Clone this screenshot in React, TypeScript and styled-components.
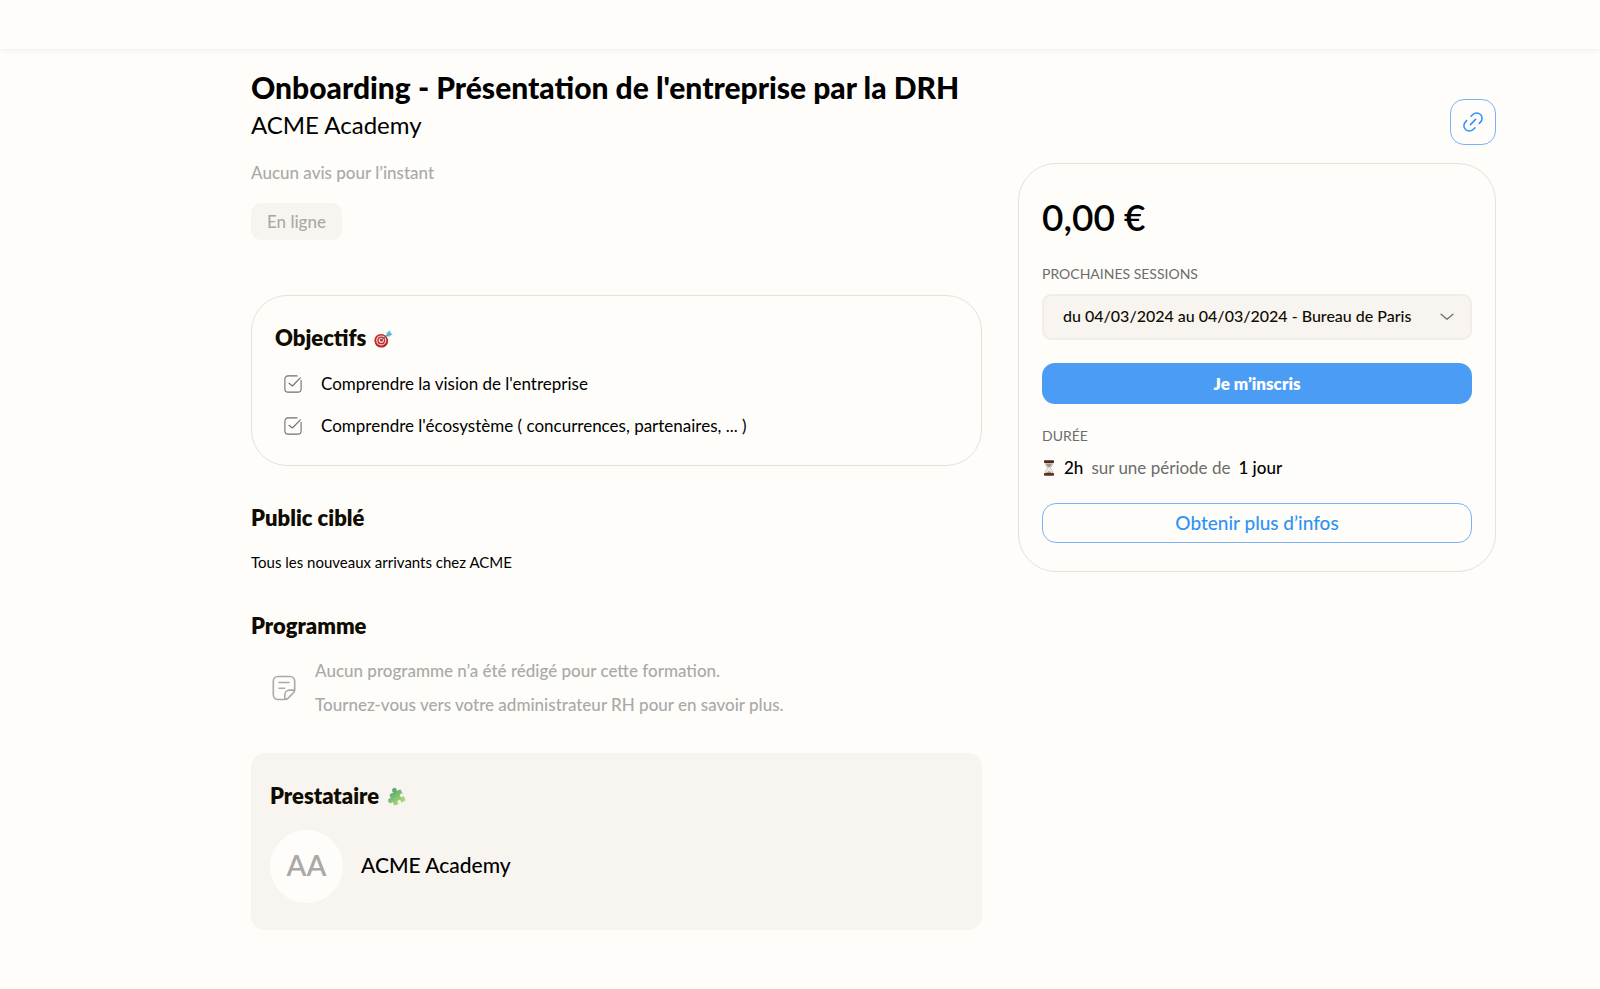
import React from "react";
import styled, { createGlobalStyle } from "styled-components";

const color = {
  page: "#fefdf9",
  soft: "#f8f5f1",
  softBorder: "#f3ece7",
  line: "#e4e2dd",
  text: "#000000",
  heading: "#100c02",
  label: "#6c6c6c",
  muted: "#a9a9a8",
  blue: "#4b9cf5",
  blueText: "#2f93f5",
  blueLine: "#7ab3f5",
};

const GlobalStyle = createGlobalStyle`
  *, *::before, *::after { box-sizing: border-box; }
  body {
    margin: 0;
    background: ${color.page};
    color: ${color.text};
    font-family: Lato, "Open Sans", sans-serif;
    font-size: 17px;
    line-height: 24px;
  }
  button, select { font-family: inherit; cursor: pointer; }
  h1, h2, p, ul { margin: 0; padding: 0; }
  svg { display: block; flex: none; }
`;

const TopBar = styled.header`
  height: 49px;
  background: ${color.page};
  box-shadow: 0 1px 5px rgba(0, 0, 0, 0.07);
`;

const Page = styled.main`
  display: grid;
  grid-template-columns: minmax(0, 1fr) 478px;
  align-items: start;
  gap: 36px;
  padding: 19px 104px 58px 251px;
`;

const Content = styled.div`
  display: flex;
  flex-direction: column;
`;

const Title = styled.h1`
  font-size: 30px;
  line-height: 38px;
  font-weight: 900;
`;

const Organisation = styled.p`
  margin-top: 3px;
  font-size: 24px;
  line-height: 32px;
`;

const Rating = styled.p`
  margin-top: 20px;
  color: ${color.muted};
  font-weight: 500;
`;

const Badge = styled.span`
  display: flex;
  align-items: center;
  align-self: flex-start;
  height: 37px;
  margin-top: 18px;
  padding: 0 16px;
  border-radius: 10px;
  background: ${color.soft};
  color: ${color.muted};
  font-weight: 500;
`;

const Goals = styled.section`
  margin-top: 55px;
  padding: 28px 23px 27px;
  border: 1px solid ${color.line};
  border-radius: 36px;
`;

const Heading = styled.h2`
  display: flex;
  align-items: center;
  gap: 8px;
  color: ${color.heading};
  font-size: 22px;
  line-height: 28px;
  font-weight: 800;
`;

const GoalList = styled.ul`
  display: flex;
  flex-direction: column;
  gap: 18px;
  margin-top: 20px;
  padding-left: 9px;
  list-style: none;
`;

const Goal = styled.li`
  display: flex;
  align-items: center;
  gap: 19px;
`;

const Section = styled.section`
  margin-top: 38px;
`;

const Paragraph = styled.p`
  margin-top: 18px;
  font-size: 15px;
`;

const EmptyProgram = styled.div`
  display: flex;
  align-items: center;
  gap: 19px;
  margin-top: 19px;
  padding-left: 21px;
  color: ${color.muted};
  font-weight: 500;
`;

const EmptyLines = styled.div`
  display: flex;
  flex-direction: column;
  gap: 10px;
`;

const Provider = styled.section`
  margin-top: 36px;
  padding: 29px 19px 27px;
  border-radius: 14px;
  background: ${color.soft};
`;

const ProviderRow = styled.div`
  display: flex;
  align-items: center;
  gap: 18px;
  margin-top: 20px;
`;

const Avatar = styled.span`
  display: grid;
  place-items: center;
  width: 73px;
  height: 73px;
  padding-bottom: 4px;
  border-radius: 50%;
  background: ${color.page};
  color: ${color.muted};
  font-size: 29px;
  line-height: 36px;
  font-weight: 600;
`;

const ProviderName = styled.p`
  font-size: 21px;
  line-height: 28px;
  padding-bottom: 4px;
  font-weight: 500;
`;

const Aside = styled.aside`
  display: flex;
  flex-direction: column;
  padding-top: 31px;
`;

const LinkButton = styled.button`
  display: grid;
  place-items: center;
  align-self: flex-end;
  width: 46px;
  height: 46px;
  padding: 0;
  border: 1px solid ${color.blueLine};
  border-radius: 14px;
  background: transparent;
  color: ${color.blueText};
`;

const BookingCard = styled.section`
  display: flex;
  flex-direction: column;
  margin-top: 18px;
  padding: 29px 23px 28px;
  border: 1px solid ${color.line};
  border-radius: 38px;
`;

const Price = styled.p`
  margin-bottom: 23px;
  font-size: 37px;
  line-height: 48px;
  font-weight: 600;
`;

const Label = styled.label`
  color: ${color.label};
  font-size: 14px;
  line-height: 20px;
  text-transform: uppercase;
`;

const LabelText = styled(Label).attrs({ as: "p" })``;

const SelectBox = styled.div`
  position: relative;
  margin-top: 10px;
`;

const Select = styled.select`
  display: block;
  width: 100%;
  height: 46px;
  padding: 0 48px 3px 19px;
  border: 2px solid ${color.softBorder};
  border-radius: 9px;
  background: ${color.soft};
  color: ${color.heading};
  font-size: 16px;
  font-weight: 500;
  appearance: none;
`;

const SelectArrow = styled.span`
  position: absolute;
  top: 50%;
  right: 18px;
  transform: translateY(-50%);
  color: #6f6f6f;
  pointer-events: none;
`;

const SignUpButton = styled.button`
  height: 41px;
  margin: 23px 0 22px;
  border: 0;
  border-radius: 13px;
  background: ${color.blue};
  color: #ffffff;
  font-size: 17px;
  font-weight: 800;
`;

const Duration = styled.p`
  display: flex;
  align-items: center;
  gap: 8px;
  margin-top: 10px;
  color: ${color.label};
`;

const DurationValue = styled.strong`
  color: ${color.text};
  font-weight: 500;
`;

const InfoButton = styled.button`
  height: 40px;
  margin-top: 23px;
  padding: 0 0 2px;
  border: 1px solid ${color.blueLine};
  border-radius: 14px;
  background: transparent;
  color: ${color.blueText};
  font-size: 19px;
  font-weight: 500;
`;

const LinkIcon = () => (
  <svg width="26" height="26" viewBox="0 0 24 24" fill="none" stroke="currentColor" strokeWidth="1.4" strokeLinecap="round" aria-hidden="true">
    <g transform="rotate(-45 12 12)">
      <path d="M9.600 17H7.200A5 5 0 0 1 7.200 7h1.600" />
      <path d="M14.400 7h2.400a5 5 0 0 1 0 10h-1.600" />
      <path d="M8.600 12h6.800" />
    </g>
  </svg>
);

const CheckIcon = () => (
  <svg width="18" height="18" viewBox="0 0 18 18" fill="none" stroke="#6f6f6f" strokeWidth="1.100" strokeLinecap="round" strokeLinejoin="round" aria-hidden="true">
    <path d="M13 .9H4A3.100 3.100 0 0 0 .9 4v10A3.100 3.100 0 0 0 4 17.100h10a3.100 3.100 0 0 0 3.100-3.100V5.200" />
    <path d="M5 8.300l3.400 2.700 7.900-8.200" />
  </svg>
);

const NoteIcon = () => (
  <svg width="24" height="26" viewBox="0 0 24 26" fill="none" stroke="currentColor" strokeWidth="1.600" strokeLinecap="round" strokeLinejoin="round" aria-hidden="true">
    <path d="M12.500 24.500H6a4.700 4.700 0 0 1-4.700-4.700V6.200A4.700 4.700 0 0 1 6 1.500h12a4.700 4.700 0 0 1 4.700 4.700v8.300c0 1.300-.4 2.300-1.300 3.300l-5.200 5.300c-1 1-2.200 1.400-3.700 1.400z" />
    <path d="M12.800 24.300v-4.500a4.700 4.700 0 0 1 4.700-4.700h5" />
    <path d="M7 7.500h10M7 13.200h5.500" />
  </svg>
);

const ChevronIcon = () => (
  <svg width="14" height="8" viewBox="0 0 14 8" fill="none" stroke="currentColor" strokeWidth="1.300" strokeLinecap="round" strokeLinejoin="round" aria-hidden="true">
    <path d="M1 1.200l6 5 6-5" />
  </svg>
);

const TargetIcon = () => (
  <svg width="19" height="20" viewBox="0 -2 19 20" aria-hidden="true">
    <ellipse cx="7.400" cy="11" rx="6.600" ry="6.600" fill="#8e1d1d" />
    <ellipse cx="7" cy="10.500" rx="6.600" ry="6.600" fill="#c9262a" />
    <circle cx="7.200" cy="10.400" r="5" fill="#f1dfdc" />
    <circle cx="7.200" cy="10.400" r="3.900" fill="#c9262a" />
    <circle cx="7.300" cy="10.300" r="2.600" fill="#f1dfdc" />
    <circle cx="7.400" cy="10.200" r="1.400" fill="#c9262a" />
    <path d="M7.400 10.200l6-5.500" stroke="#3f6f7c" strokeWidth="1" />
    <path d="M11.900 6.400l1-4L16.300.2l.2 2.900 2.300 1-3.200 2.400z" fill="#6fc4d2" />
    <path d="M12.300 6l4.200-2.900" stroke="#3e93a6" strokeWidth=".8" />
  </svg>
);

const PuzzleIcon = () => (
  <svg width="20" height="20" viewBox="0 -1 20 20" aria-hidden="true">
    <defs>
      <linearGradient id="puzzle" gradientUnits="userSpaceOnUse" x1="8" y1="1" x2="12" y2="19">
        <stop offset="0" stopColor="#4fa46b" />
        <stop offset="1" stopColor="#b6e27c" />
      </linearGradient>
      <mask id="puzzle-notches">
        <rect x="-5" y="-5" width="30" height="30" fill="#ffffff" />
        <circle cx="15" cy="10.500" r="1.800" fill="#000000" />
        <circle cx="10" cy="15.500" r="1.800" fill="#000000" />
      </mask>
    </defs>
    <g transform="rotate(-25 10 10)" fill="url(#puzzle)" stroke="#5f9f5c" strokeWidth=".3">
      <g mask="url(#puzzle-notches)">
        <circle cx="2.700" cy="10.500" r="2.300" />
        <circle cx="10.500" cy="3" r="2.300" />
        <rect x="4" y="4.500" width="12.500" height="12.500" rx="1.200" stroke="none" />
      </g>
    </g>
  </svg>
);

const HourglassIcon = () => (
  <svg width="14" height="16" viewBox="0 0 14 16" aria-hidden="true">
    <path d="M3.200 2.500h7.600c0 3-1.300 4-2.600 5.500 1.300 1.500 2.600 2.500 2.600 5.500H3.200c0-3 1.300-4 2.600-5.500C4.500 6.500 3.200 5.500 3.200 2.500z" fill="#e8ecee" stroke="#a9adb0" strokeWidth=".7" />
    <path d="M4 3.500h6c-.3 1.900-1.600 2.700-3 4.100C5.600 6.200 4.300 5.400 4 3.500z" fill="#a58f79" />
    <path d="M4.200 13.300c.4-1.300 1.600-1.900 2.800-2.400 1.200.5 2.400 1.100 2.800 2.400z" fill="#c98f55" />
    <rect x="2" y=".2" width="10" height="2.700" rx=".7" fill="#4f2a1c" />
    <rect x="2" y="13.100" width="10" height="2.700" rx=".7" fill="#5e3420" />
  </svg>
);

const goals = [
  "Comprendre la vision de l'entreprise",
  "Comprendre l'écosystème ( concurrences, partenaires, ... )",
];

export default function App() {
  return (
    <>
      <GlobalStyle />
      <TopBar />
      <Page>
        <Content>
          <Title>Onboarding - Présentation de l'entreprise par la DRH</Title>
          <Organisation>ACME Academy</Organisation>
          <Rating>Aucun avis pour l’instant</Rating>
          <Badge>En ligne</Badge>

          <Goals>
            <Heading>
              Objectifs
              <TargetIcon />
            </Heading>
            <GoalList>
              {goals.map((goal) => (
                <Goal key={goal}>
                  <CheckIcon />
                  {goal}
                </Goal>
              ))}
            </GoalList>
          </Goals>

          <Section>
            <Heading>Public ciblé</Heading>
            <Paragraph>Tous les nouveaux arrivants chez ACME</Paragraph>
          </Section>

          <Section>
            <Heading>Programme</Heading>
            <EmptyProgram>
              <NoteIcon />
              <EmptyLines>
                <p>Aucun programme n’a été rédigé pour cette formation.</p>
                <p>Tournez-vous vers votre administrateur RH pour en savoir plus.</p>
              </EmptyLines>
            </EmptyProgram>
          </Section>

          <Provider>
            <Heading>
              Prestataire
              <PuzzleIcon />
            </Heading>
            <ProviderRow>
              <Avatar>AA</Avatar>
              <ProviderName>ACME Academy</ProviderName>
            </ProviderRow>
          </Provider>
        </Content>

        <Aside>
          <LinkButton type="button" aria-label="Copier le lien">
            <LinkIcon />
          </LinkButton>
          <BookingCard>
            <Price>0,00 €</Price>
            <Label htmlFor="session">Prochaines sessions</Label>
            <SelectBox>
              <Select id="session">
                <option>du 04/03/2024 au 04/03/2024 - Bureau de Paris</option>
              </Select>
              <SelectArrow>
                <ChevronIcon />
              </SelectArrow>
            </SelectBox>
            <SignUpButton type="button">Je m’inscris</SignUpButton>
            <LabelText>Durée</LabelText>
            <Duration>
              <HourglassIcon />
              <DurationValue>2h</DurationValue>
              <span>sur une période de</span>
              <DurationValue>1 jour</DurationValue>
            </Duration>
            <InfoButton type="button">Obtenir plus d’infos</InfoButton>
          </BookingCard>
        </Aside>
      </Page>
    </>
  );
}
